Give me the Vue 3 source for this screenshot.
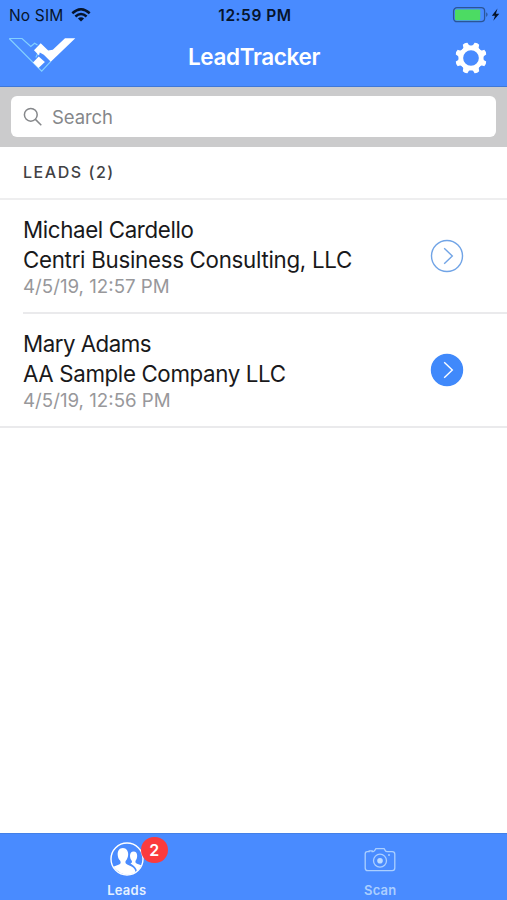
<script setup>
const leads = [
  { name: 'Michael Cardello', company: 'Centri Business Consulting, LLC', time: '4/5/19, 12:57 PM', filled: false, id: 'first' },
  { name: 'Mary Adams', company: 'AA Sample Company LLC', time: '4/5/19, 12:56 PM', filled: true, id: 'second' },
]
const teeth = [22.5, 67.5, 112.5, 157.5, 202.5, 247.5, 292.5, 337.5]
</script>

<template>
  <div class="screen">
    <header class="header">
      <div class="status">
        <div class="carrier">
          <span class="sim">No SIM</span>
          <svg class="wifi" width="20" height="14" viewBox="0 0 20 14" fill="none" stroke="#06142b" stroke-width="2.5">
            <path d="M1.3 5.2Q10 -2.6 18.7 5.2" />
            <path d="M4.4 8.5Q10 3.6 15.6 8.5" />
            <path d="M6.9 10.6Q10 7.9 13.1 10.6L10 13.6Z" fill="#06142b" stroke="none" />
          </svg>
        </div>
        <span class="clock">12:59 PM</span>
        <svg class="battery" width="50" height="18" viewBox="0 0 50 18">
          <rect x="1.6" y="1.7" width="31" height="14" rx="3.4" fill="none" stroke="#2b5596" stroke-width="1.3" />
          <rect x="3" y="3.4" width="25.2" height="10.8" rx="1.2" fill="#4cdb63" />
          <path d="M34.2 6.3Q37 8.5 34.2 11Z" fill="#2b5596" />
          <path d="M45.5 2.6L39.8 9.7H43L41.3 14.8L47.3 7.7H43.9Z" fill="#06142b" />
        </svg>
      </div>
      <div class="nav">
        <svg class="logo" width="68" height="36" viewBox="0 0 68 36">
          <path d="M1.2 1.5H14L22.8 9.4L26.6 6.2L29.5 8M1.2 1.5L33.7 34.2L42.8 24.4M30.5 15L27.8 20.5" fill="none" stroke="#83d0ff" stroke-width="1.2" />
          <path d="M57 1.2H67.3L42.8 24.7L35.8 17.8L31.8 15.5L31 18.6L26 13.2L32.7 6.2L40.2 13.4L44.8 12.8Z" fill="#fff" />
          <path d="M30.7 19.5L36.9 25L30.5 31L25 25.6Z" fill="#fff" />
        </svg>
        <h1>LeadTracker</h1>
        <svg class="gear" width="34" height="34" viewBox="-17 -17 34 34">
          <circle r="10.2" fill="none" stroke="#fff" stroke-width="4.7" />
          <path v-for="angle in teeth" :key="angle" d="M-5 -10.5Q-2.4 -12 -2.5 -15.4Q0 -16.6 2.5 -15.4Q2.4 -12 5 -10.5Z" fill="#fff" :transform="`rotate(${angle})`" />
        </svg>
      </div>
    </header>

    <div class="search-bar">
      <div class="search">
        <svg width="20" height="20" viewBox="0 0 20 20" fill="none" stroke="#85878a" stroke-width="1.5">
          <circle cx="7.8" cy="7.8" r="6.4" /><path d="M12.4 12.4L18.3 18.3" />
        </svg>
        <span>Search</span>
      </div>
    </div>

    <main>
      <h2><span>LEADS (2)</span></h2>
      <div v-for="lead in leads" :key="lead.id" class="lead">
        <div class="details">
          <div class="line"><span :class="['name', lead.id]">{{ lead.name }}</span></div>
          <div class="line"><span :class="['company', lead.id]">{{ lead.company }}</span></div>
          <div class="time"><span>{{ lead.time }}</span></div>
        </div>
        <svg class="arrow" :class="{ filled: lead.filled }" width="34" height="34" viewBox="0 0 34 34">
          <circle cx="17" cy="17" r="15.5" />
          <path d="M14.2 9.3L22.3 17L14.2 24.7" />
        </svg>
      </div>
    </main>

    <footer>
      <div class="tab active">
        <div class="icon">
          <svg width="36" height="36" viewBox="0 0 36 36">
            <circle cx="18" cy="18" r="16" fill="none" stroke="#fff" stroke-width="1.4" />
            <path d="M21.5 22.5Q23.6 21.8 22.9 20C20.3 17.1 20 10.4 24.6 10.4C29.2 10.4 28.9 17.1 26.4 20Q26 22 28 22.8L32.2 24.2Q30.7 27.6 28 30.2Q27.2 25.8 21.5 22.5Z" fill="#fff" />
            <path d="M4.3 25.8L10.1 23.5Q12.5 22.4 11.2 19.7C7.5 16.4 7.4 7 13.9 7C20.4 7 20.3 16.4 16.8 19.7Q15.5 22.4 18.2 23.6L22.5 25.4Q26 27 26.5 31.2Q14.5 38 4.3 25.8Z" fill="#fff" />
          </svg>
          <b class="badge">2</b>
        </div>
        <span class="leads-label">Leads</span>
      </div>
      <div class="tab">
        <div class="icon">
          <svg class="camera" width="36" height="36" viewBox="0 0 36 36" fill="none" stroke="#abcfff" stroke-width="1.3">
            <path d="M5.2 9.7H7.2V8.8H10.2V9.7H11.2Q12.4 9.5 13 8.1L13.9 6.6H22.1L23 8.1Q23.8 9.7 25.2 9.7H30.2Q32.8 9.7 32.8 12.3V26Q32.8 28.6 30.2 28.6H5.8Q3.2 28.6 3.2 26V12Q3.2 9.7 5.2 9.7Z" />
            <circle cx="18" cy="18.7" r="6.5" />
            <circle cx="18" cy="18.7" r="2.8" fill="#bddbff" stroke="none" />
            <circle cx="27" cy="13" r="1" fill="#abcfff" stroke="none" />
          </svg>
        </div>
        <span class="scan-label">Scan</span>
      </div>
    </footer>
  </div>
</template>

<style>
body { margin: 0; }
</style>

<style scoped>
* { box-sizing: border-box; }
.screen { width: 507px; height: 900px; display: flex; flex-direction: column; background: #fff; font-family: Inter, "Liberation Sans", sans-serif; overflow: hidden; }
.header { height: 87px; flex: none; background: #498bff; border-bottom: 1px solid #3f78d8; }
.status { height: 30px; display: grid; grid-template-columns: 1fr auto 1fr; align-items: center; color: #06142b; }
.carrier { display: flex; align-items: center; gap: 8px; padding-left: 9px; }
.sim { font-size: 15.5px; letter-spacing: .15px; }
.clock { font-size: 15.5px; font-weight: 600; letter-spacing: .55px; padding-left: 3px; }
.battery { justify-self: end; margin-right: 5px; }
.nav { height: 56px; display: grid; grid-template-columns: 1fr auto 1fr; align-items: center; padding: 0 19px 0 8px; }
.logo { margin-bottom: 6px; }
h1 { margin: 0; padding-bottom: 2px; color: #fff; font-size: 22.5px; line-height: 28px; font-weight: 600; padding-left: 12px; letter-spacing: -.35px; }
.gear { justify-self: end; }
.search-bar { height: 60px; flex: none; padding: 9px 11px 10px; background: #cbcbcc; }
.search { height: 41px; display: flex; align-items: center; gap: 9px; padding-left: 12px; background: #fff; border-radius: 6px; color: #85878a; font-size: 18.5px; letter-spacing: -.1px; }
main { flex: 1; }
h2 { display: flex; align-items: center; height: 53px; margin: 0; padding: 0 0 1px 23px; border-bottom: 2px solid #eeeeef; color: #414144; font-size: 16px; font-weight: 500; letter-spacing: 1.55px; }
.lead { height: 114px; display: flex; margin-left: 23px; border-bottom: 2px solid #eaeaec; }
.lead:last-child { margin-left: 0; padding-left: 23px; }
.details { flex: 1; padding-top: 15px; white-space: nowrap; color: #19191b; }
.line { height: 30px; line-height: 30px; font-size: 22.3px; letter-spacing: -.36px; }
.company { letter-spacing: -.28px; }
.company.second { letter-spacing: -.36px; }
.name.second { letter-spacing: -.5px; }
.line + .line { height: 29px; line-height: 29px; }
.time { height: 25px; line-height: 25px; font-size: 18.7px; color: #98989b; }
.arrow { margin: 39px 43px 0 0; fill: none; stroke: #71a4e6; stroke-width: 1.4; }
.arrow.filled circle { fill: #4089fb; stroke: #4089fb; }
.arrow.filled path { stroke: #fff; }
footer { height: 67px; flex: none; display: grid; grid-template-columns: 1fr 1fr; background: #498bff; border-top: 1px solid #4380e7; }
.tab { display: flex; flex-direction: column; align-items: center; padding-top: 7px; color: #abcfff; font-size: 13px; line-height: 18px; font-weight: 600; letter-spacing: .25px; }
.active { color: #e5f1ff; }
.icon { height: 40px; position: relative; }
.camera { margin-top: 1px; }
.badge { position: absolute; left: 32px; top: -4px; width: 27px; height: 26px; border-radius: 13px; background: #fb3b3d; color: #fff; font-size: 16px; line-height: 26px; text-align: center; font-weight: 600; }
</style>
